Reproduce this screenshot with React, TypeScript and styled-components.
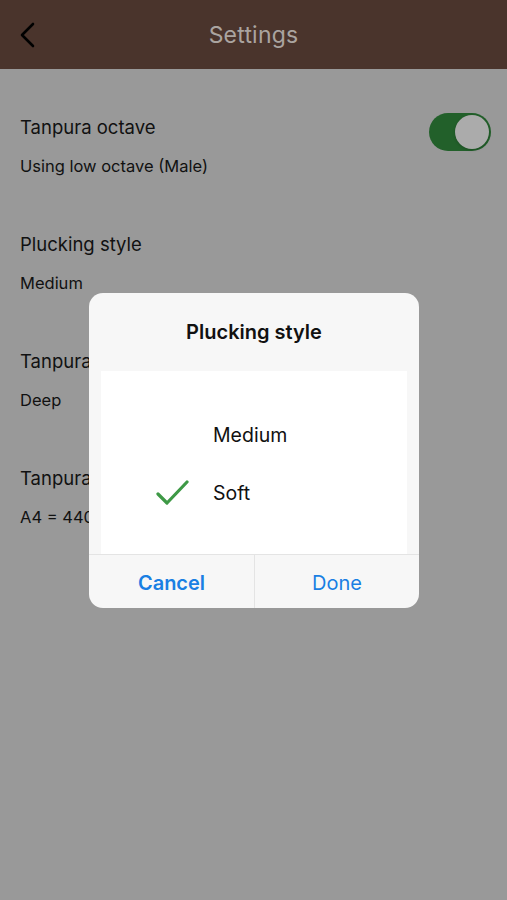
import { FC } from "react";
import styled, { createGlobalStyle } from "styled-components";

const GlobalStyle = createGlobalStyle`
  html, body {
    margin: 0;
    padding: 0;
    background: #999999;
  }
  body {
    font-family: Inter, "Noto Sans", "Liberation Sans", sans-serif;
    -webkit-font-smoothing: antialiased;
  }
`;

type SettingItem = {
  id: string;
  title: string;
  value: string;
  toggle?: boolean;
};

const settings: SettingItem[] = [
  { id: "octave", title: "Tanpura octave", value: "Using low octave (Male)", toggle: true },
  { id: "pluck", title: "Plucking style", value: "Medium" },
  { id: "tone", title: "Tanpura tone", value: "Deep" },
  { id: "tuning", title: "Tanpura tuning", value: "A4 = 440 Hz" },
];

const options = [
  { id: "medium", label: "Medium", checked: false },
  { id: "soft", label: "Soft", checked: true },
];

const BackIcon = () => (
  <svg width="18" height="26" viewBox="0 0 18 26" fill="none">
    <path d="M14 2 L3 13 L14 24" stroke="#000" strokeWidth="2.6" strokeLinecap="round" strokeLinejoin="round" />
  </svg>
);

const CheckIcon = () => (
  <svg width="34" height="28" viewBox="0 0 34 28" fill="none">
    <path d="M2 15 L11 24 L31 3" stroke="#3e9946" strokeWidth="3.2" strokeLinecap="round" strokeLinejoin="round" />
  </svg>
);

const Setting: FC<SettingItem> = ({ title, value, toggle }) => (
  <Row>
    <RowText>
      <RowTitle>{title}</RowTitle>
      <RowValue>{value}</RowValue>
    </RowText>
    {toggle && (
      <Toggle>
        <Knob />
      </Toggle>
    )}
  </Row>
);

const App: FC = () => {
  return (
    <Page>
      <GlobalStyle />
      <Header>
        <BackButton>
          <BackIcon />
        </BackButton>
        <HeaderTitle>Settings</HeaderTitle>
      </Header>

      <List>
        {settings.map((s) => (
          <Setting key={s.id} {...s} />
        ))}
      </List>

      <Dialog>
        <DialogTitle>Plucking style</DialogTitle>
        <Picker>
          {options.map((o) => (
            <Option key={o.id}>
              <CheckSlot>{o.checked && <CheckIcon />}</CheckSlot>
              <OptionLabel>{o.label}</OptionLabel>
            </Option>
          ))}
        </Picker>
        <Actions>
          <ActionButton bold>Cancel</ActionButton>
          <ActionButton>Done</ActionButton>
        </Actions>
      </Dialog>
    </Page>
  );
};

export default App;

const Page = styled.div`
  position: relative;
  width: 507px;
  height: 900px;
  background: #999999;
  overflow: hidden;
`;

const Header = styled.div`
  height: 69px;
  background: #4a342c;
  display: flex;
  align-items: center;
  justify-content: center;
  position: relative;
`;

const BackButton = styled.div`
  position: absolute;
  left: 19px;
  top: 22px;
  display: flex;
`;

const HeaderTitle = styled.div`
  color: #aaa4a0;
  font-size: 23px;
  letter-spacing: 0.2px;
`;

const List = styled.div`
  padding: 46px 16px 0 20px;
  display: flex;
  flex-direction: column;
  gap: 55px;
`;

const Row = styled.div`
  display: flex;
  justify-content: space-between;
  align-items: flex-start;
`;

const RowText = styled.div`
  display: flex;
  flex-direction: column;
  gap: 16px;
`;

const RowTitle = styled.div`
  font-size: 18.5px;
  line-height: 24px;
  color: #111;
`;

const RowValue = styled.div`
  font-size: 16.5px;
  line-height: 22px;
  color: #111;
`;

const Toggle = styled.div`
  width: 62px;
  height: 38px;
  margin-top: -2px;
  border-radius: 19px;
  background: #22602a;
  display: flex;
  justify-content: flex-end;
  align-items: center;
  padding: 0 2px;
  box-sizing: border-box;
`;

const Knob = styled.div`
  width: 34px;
  height: 34px;
  border-radius: 50%;
  background: #ababab;
  box-shadow: 0 1px 3px rgba(0, 0, 0, 0.2);
`;

const Dialog = styled.div`
  position: absolute;
  left: 89px;
  top: 293px;
  width: 330px;
  height: 315px;
  border-radius: 14px;
  background: #f7f7f7;
  display: flex;
  flex-direction: column;
  overflow: hidden;
`;

const DialogTitle = styled.div`
  height: 78px;
  display: flex;
  align-items: center;
  justify-content: center;
  font-size: 20px;
  font-weight: 600;
  color: #111;
`;

const Picker = styled.div`
  margin: 0 12px;
  height: 183px;
  background: #ffffff;
  display: flex;
  flex-direction: column;
  justify-content: center;
  padding-top: 2px;
  box-sizing: border-box;
`;

const Option = styled.div`
  height: 58px;
  display: flex;
  align-items: center;
`;

const CheckSlot = styled.div`
  width: 112px;
  padding-left: 55px;
  box-sizing: border-box;
  display: flex;
  align-items: center;
`;

const OptionLabel = styled.div`
  font-size: 19.5px;
  color: #111;
`;

const Actions = styled.div`
  flex: 1;
  display: grid;
  grid-template-columns: 1fr 1fr;
  border-top: 1px solid #e4e4e4;
`;

const ActionButton = styled.div<{ bold?: boolean }>`
  display: flex;
  align-items: center;
  justify-content: center;
  padding-top: 2px;
  font-size: 20px;
  color: #1a7fe3;
  font-weight: ${(p) => (p.bold ? 600 : 400)};
  & + & {
    border-left: 1px solid #e4e4e4;
  }
`;
